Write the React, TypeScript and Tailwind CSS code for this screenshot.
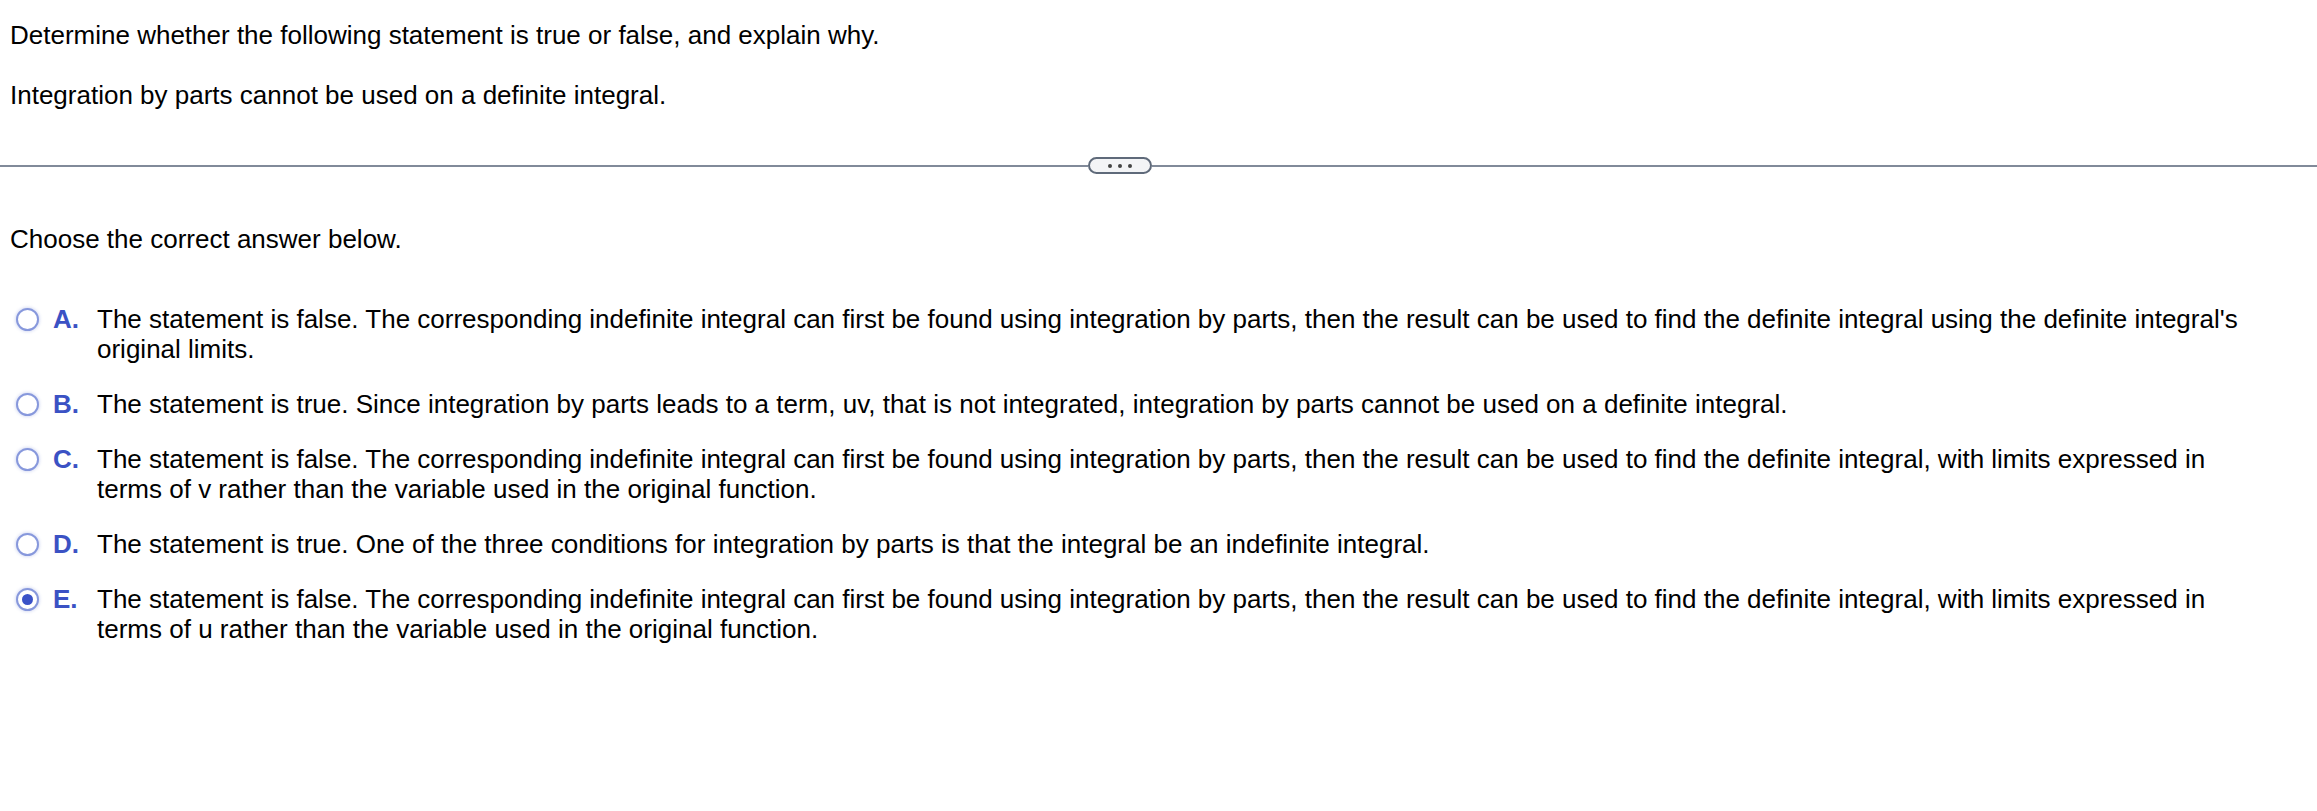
import React from "react";

type Choice = {
  letter: string;
  text: string;
};

const choices: Choice[] = [
  {
    letter: "A",
    text: "The statement is false. The corresponding indefinite integral can first be found using integration by parts, then the result can be used to find the definite integral using the definite integral's original limits.",
  },
  {
    letter: "B",
    text: "The statement is true. Since integration by parts leads to a term, uv, that is not integrated, integration by parts cannot be used on a definite integral.",
  },
  {
    letter: "C",
    text: "The statement is false. The corresponding indefinite integral can first be found using integration by parts, then the result can be used to find the definite integral, with limits expressed in terms of v rather than the variable used in the original function.",
  },
  {
    letter: "D",
    text: "The statement is true. One of the three conditions for integration by parts is that the integral be an indefinite integral.",
  },
  {
    letter: "E",
    text: "The statement is false. The corresponding indefinite integral can first be found using integration by parts, then the result can be used to find the definite integral, with limits expressed in terms of u rather than the variable used in the original function.",
  },
];

function Radio({ checked }: { checked: boolean }) {
  return (
    <span className="flex h-[30px] w-[30px] shrink-0 items-center justify-center">
      <span className="flex h-[23px] w-[23px] items-center justify-center rounded-full border-[2.5px] border-[#8798dc] bg-white shadow-[0_0_3px_1px_rgba(129,147,218,0.3)]">
        {checked && <span className="h-[11px] w-[11px] rounded-full bg-[#3a52c8]" />}
      </span>
    </span>
  );
}

export default function App() {
  const selected = "E";

  return (
    <div className="min-h-[811px] w-full bg-white font-['Liberation_Sans',Arial,sans-serif] text-black">
      <div className="px-[10px] pt-[20px] text-[26px] leading-[30px]">
        <p>Determine whether the following statement is true or false, and explain why.</p>
        <p className="mt-[30px]">Integration by parts cannot be used on a definite integral.</p>
      </div>

      <div className="mt-[47px] flex items-center">
        <div className="h-[2px] w-[1088px] bg-[#818a99]" />
        <button className="flex h-[17px] w-[64px] items-center justify-center gap-[6px] rounded-full border-2 border-[#5f6a7a] bg-[#f3f4f6]">
          <span className="h-[4px] w-[4px] rounded-full bg-[#444]" />
          <span className="h-[4px] w-[4px] rounded-full bg-[#444]" />
          <span className="h-[4px] w-[4px] rounded-full bg-[#444]" />
        </button>
        <div className="h-[2px] flex-1 bg-[#818a99]" />
      </div>

      <p className="mt-[50px] px-[10px] text-[26px] leading-[30px]">Choose the correct answer below.</p>

      <div className="mt-[50px] flex flex-col gap-[25px] pl-[12px] pr-[58px]">
        {choices.map((c) => (
          <div key={c.letter} className="flex items-start text-[26px] leading-[30px]">
            <Radio checked={c.letter === selected} />
            <span className="w-[55px] shrink-0 pl-[11px] font-bold text-[#3b52c4]">{c.letter}.</span>
            <span className="flex-1">{c.text}</span>
          </div>
        ))}
      </div>
    </div>
  );
}
